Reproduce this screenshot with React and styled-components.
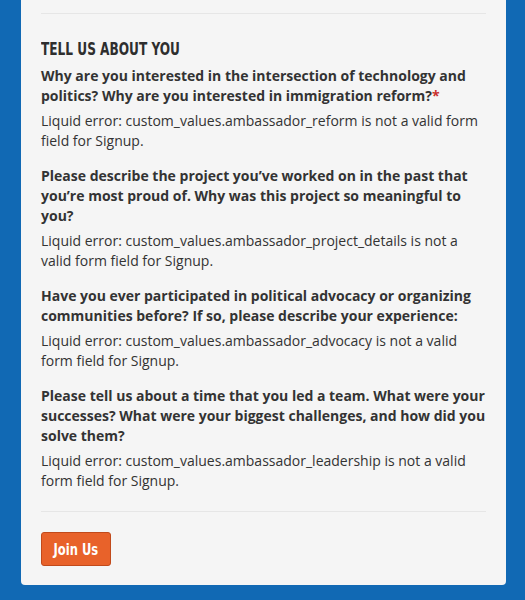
import styled, { createGlobalStyle } from "styled-components";

const GlobalStyle = createGlobalStyle`
  html, body {
    margin: 0;
    padding: 0;
    background: #1169b4;
  }
  body {
    font-family: "Open Sans", "Liberation Sans", sans-serif;
    color: #333;
  }
`;

const Page = styled.div`
  min-height: 600px;
  padding: 0 19px 0 21px;
  box-sizing: border-box;
`;

const Card = styled.div`
  background: #f5f5f5;
  border-radius: 0 0 4px 4px;
  padding: 13px 20px 19px;
`;

const Divider = styled.hr`
  border: 0;
  border-top: 1px solid #e6e6e6;
  margin: ${(p) => p.$m || "0"};
`;

const Heading = styled.h3`
  font-family: "DejaVu Sans Condensed", "Open Sans", sans-serif;
  font-weight: 700;
  font-size: 18px;
  line-height: 20px;
  color: #2e2e2e;
  margin: 25px 0 7px;
`;

// condensed look: the page font is a narrow display face
const Narrow = styled.span`
  display: inline-block;
  transform: scaleX(${(p) => p.$s || 0.75});
  transform-origin: ${(p) => p.$o || "left"} center;
  white-space: nowrap;
`;

const Field = styled.div`
  margin-bottom: 15px;

  &:last-child {
    margin-bottom: 0;
  }
`;

const Question = styled.div`
  font-size: 14px;
  font-weight: 700;
  line-height: 20px;
  color: #333;
  margin-bottom: 5px;
`;

const Required = styled.span`
  color: #c9302c;
`;

const Answer = styled.div`
  font-size: 14px;
  line-height: 20px;
  color: #333;
`;

const Button = styled.button`
  font-family: "DejaVu Sans Condensed", "Open Sans", sans-serif;
  font-size: 16px;
  font-weight: 700;
  color: #fff;
  background: #e8622a;
  border: 1px solid #c14a1b;
  border-radius: 3px;
  width: 70px;
  height: 34px;
  padding: 0;
  display: flex;
  align-items: center;
  justify-content: center;
  cursor: pointer;
`;

const fields = [
  {
    q: "Why are you interested in the intersection of technology and politics? Why are you interested in immigration reform?",
    req: true,
    a: "Liquid error: custom_values.ambassador_reform is not a valid form field for Signup.",
  },
  {
    q: "Please describe the project you\u2019ve worked on in the past that you\u2019re most proud of. Why was this project so meaningful to you?",
    a: "Liquid error: custom_values.ambassador_project_details is not a valid form field for Signup.",
  },
  {
    q: "Have you ever participated in political advocacy or organizing communities before? If so, please describe your experience:",
    a: "Liquid error: custom_values.ambassador_advocacy is not a valid form field for Signup.",
  },
  {
    q: "Please tell us about a time that you led a team. What were your successes? What were your biggest challenges, and how did you solve them?",
    a: "Liquid error: custom_values.ambassador_leadership is not a valid form field for Signup.",
  },
];

const App = () => {
  return (
    <Page>
      <GlobalStyle />
      <Card>
        <Divider />
        <Heading>
          <Narrow>TELL US ABOUT YOU</Narrow>
        </Heading>
        {fields.map((f, i) => (
          <Field key={i}>
            <Question>
              {f.q}
              {f.req && <Required>*</Required>}
            </Question>
            <Answer>{f.a}</Answer>
          </Field>
        ))}
        <Divider $m="20px 0 20px" />
        <Button>
          <Narrow $s={0.8} $o="center">Join Us</Narrow>
        </Button>
      </Card>
    </Page>
  );
};

export default App;
